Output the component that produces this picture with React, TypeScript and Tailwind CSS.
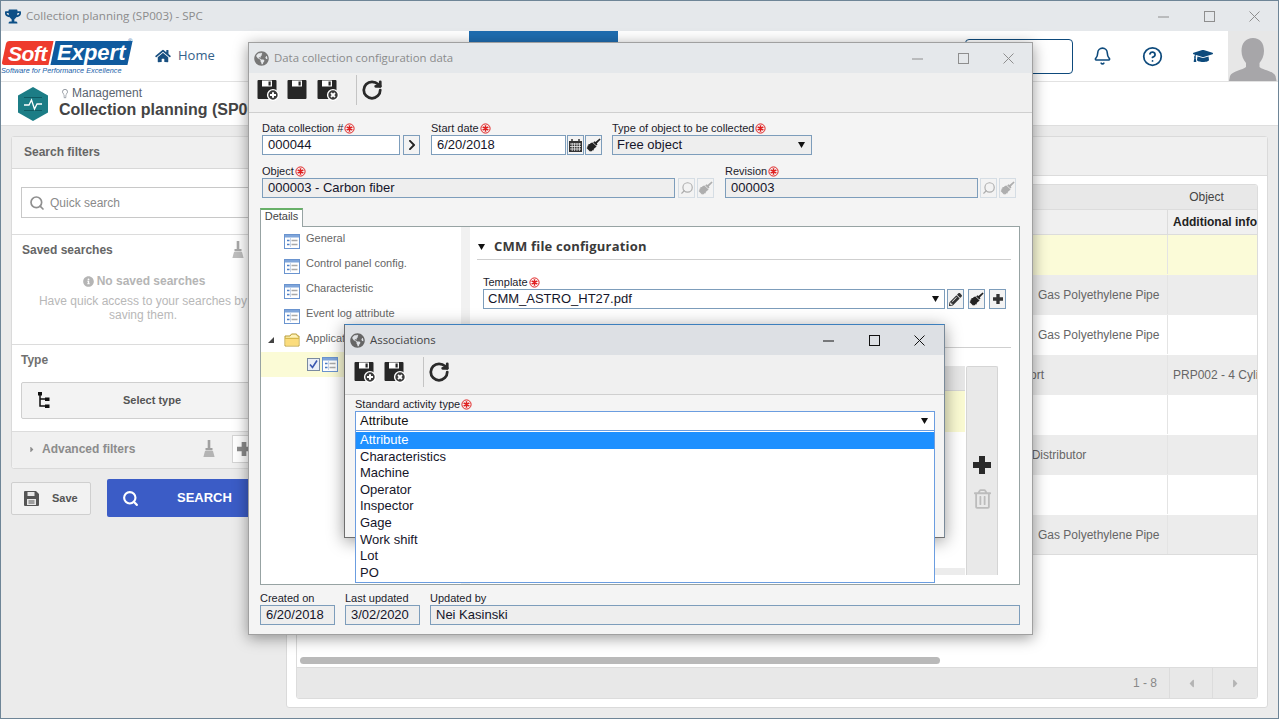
import React from "react";
import { FaTrophy, FaHome, FaGlobeAmericas, FaGraduationCap, FaPencilAlt, FaRegTrashAlt, FaCaretRight, FaCaretLeft, FaInfoCircle, FaChevronRight } from "react-icons/fa";
import { Bell, CircleHelp, Search, RotateCw, Lightbulb } from "lucide-react";

const sans = "font-['Liberation_Sans',Arial,sans-serif]";

function Req() {
  return (
    <svg width="11" height="11" viewBox="0 0 11 11" className="inline-block ml-[1px] -mt-[2px] align-middle">
      <circle cx="5.5" cy="5.5" r="4.6" fill="none" stroke="#e02020" strokeWidth="1" />
      <path d="M5.5 2.2v6.6M2.6 3.8l5.8 3.4M8.4 3.8L2.6 7.2" stroke="#e02020" strokeWidth="1.5" />
    </svg>
  );
}

function Floppy({ badge }: { badge?: "plus" | "x" }) {
  return (
    <svg width="22" height="22" viewBox="0 0 22 22">
      <path d="M1.5 1h17a1 1 0 0 1 1 1v17a1 1 0 0 1-1 1h-17a1 1 0 0 1-1-1V2a1 1 0 0 1 1-1z" fill="#262626" />
      <rect x="5" y="1.5" width="10" height="6" fill="#fff" />
      <rect x="11.5" y="2.5" width="2.2" height="4" fill="#262626" />
      {badge && <circle cx="16" cy="16" r="5.4" fill="#3a3a3a" stroke="#fff" strokeWidth="1.4" />}
      {badge === "plus" && <path d="M13 16h6M16 13.3v5.4" stroke="#fff" strokeWidth="2" />}
      {badge === "x" && <path d="M14 14l4 4M18 14l-4 4" stroke="#fff" strokeWidth="1.8" />}
    </svg>
  );
}

function FormIcon() {
  return (
    <svg width="16" height="15" viewBox="0 0 16 15" className="shrink-0">
      <rect x="0.5" y="0.5" width="15" height="14" fill="#fff" stroke="#6a94cf" />
      <rect x="1" y="1" width="14" height="2.5" fill="#7fa5da" />
      <path d="M3 6.5h2.5M3 10.5h2.5" stroke="#4f7fc4" strokeWidth="1.5" />
      <path d="M7.5 6.5h6M7.5 10.5h6" stroke="#a9a9a9" strokeWidth="1.5" />
      <path d="M6.5 4v9" stroke="#c8d6ea" />
    </svg>
  );
}

function UprightBroom({ color }: { color: string }) {
  return (
    <svg width="12" height="18" viewBox="0 0 12 18">
      <rect x="4.7" y="0" width="2.6" height="8" fill={color} />
      <rect x="2.5" y="8" width="7" height="2.4" fill={color} />
      <path d="M2 11h8l1.6 6H.4z" fill={color} opacity="0.75" />
    </svg>
  );
}

function Brush({ color }: { color: string }) {
  return (
    <svg width="15" height="15" viewBox="0 0 15 15">
      <path d="M14.6 1.4l-1-1-4.2 3.600-1-.7-1.200 1.200 3.100 3.100 1.200-1.200-.7-1z" fill={color} />
      <path d="M6.400 4.400l4.200 4.200-1.700 1.300-1 .9-.4 1.700-.9-.4-.7 1.300-1-.6-.7.9L.6 9.900l1.100-.9-.5-1 1.300-.7-.3-1 1.700-.4.9-1z" fill={color} />
    </svg>
  );
}

function Cross({ size, color }: { size: number; color: string }) {
  return (
    <svg width={size} height={size} viewBox="0 0 18 18">
      <path d="M6 0h6v6h6v6h-6v6H6v-6H0V6h6z" fill={color} />
    </svg>
  );
}

function Caption({ t, req, w }: { t: string; req?: boolean; w: string }) {
  return <div className={`${w} h-[13px] text-[11px] leading-[13px] text-[#1c1c2c] whitespace-nowrap`}>{t}{req && <Req />}</div>;
}

function Field({ v, w, grey, children }: { v?: string; w: string; grey?: boolean; children?: React.ReactNode }) {
  return (
    <div className={`${w} h-[20px] border border-[#7d9dbb] ${grey ? "bg-[#eeeeee]" : "bg-white"} ${children ? "pl-[4px]" : "pl-[5px]"} pr-[4px] flex items-center justify-between text-[13px] text-[#15152a] whitespace-nowrap overflow-hidden`}>
      <span>{v}</span>
      {children}
    </div>
  );
}

function IconBtn({ children, off, w = "w-[17px]" }: { children: React.ReactNode; off?: boolean; w?: string }) {
  return (
    <div className={`${w} h-[20px] shrink-0 border ${off ? "border-[#d5dde4] text-[#aeaeae]" : "border-[#7d9dbb] text-[#333]"} bg-[#f3f3f3] flex items-center justify-center`}>
      {children}
    </div>
  );
}

function Caret() {
  return <svg width="7" height="6" viewBox="0 0 7 6" className="shrink-0"><path d="M0 0h7L3.5 6z" fill="#111" /></svg>;
}

function Controls({ color, w }: { color: string; w: string }) {
  return (
    <div className={`flex items-center ${w} justify-between`} style={{ color }}>
      <svg width="11" height="11" viewBox="0 0 11 11"><path d="M0 6h11" stroke="currentColor" /></svg>
      <svg width="11" height="11" viewBox="0 0 11 11"><rect x="0.5" y="0.5" width="10" height="10" fill="none" stroke="currentColor" /></svg>
      <svg width="11" height="11" viewBox="0 0 11 11"><path d="M0.5 0.5l10 10M10.5 0.5l-10 10" stroke="currentColor" /></svg>
    </div>
  );
}

const rows = [
  { bg: "bg-[#fbfbd8]", text: "", pad: "" },
  { bg: "bg-[#ececec]", text: "Gas Polyethylene Pipe", pad: "pl-[741px]" },
  { bg: "bg-white", text: "Gas Polyethylene Pipe", pad: "pl-[741px]" },
  { bg: "bg-[#ececec]", text: "Port", pad: "pl-[725px]", extra: "PRP002 - 4 Cylinder" },
  { bg: "bg-white", text: "", pad: "" },
  { bg: "bg-[#ececec]", text: "Direct Distributor", pad: "pl-[700px]" },
  { bg: "bg-white", text: "", pad: "" },
  { bg: "bg-[#ececec]", text: "Gas Polyethylene Pipe", pad: "pl-[741px]" },
];

const options = ["Attribute", "Characteristics", "Machine", "Operator", "Inspector", "Gage", "Work shift", "Lot", "PO"];

function Logo() {
  return (
    <div className="w-[131px] h-[50px] pt-[10px] shrink-0 relative">
      <div className="flex h-[24px] w-[127px] -skew-x-12 ml-[3px]">
        <div className="w-[47px] bg-[#ee3b2d] rounded-l-[3px] flex items-center justify-center">
          <span className="skew-x-12 text-white font-bold italic text-[21px] leading-none font-['Liberation_Sans',sans-serif] tracking-[-0.5px]">Soft</span>
        </div>
        <div className="w-[77px] ml-[2px] bg-[#0f5a9e] flex items-center justify-center">
          <span className="skew-x-12 text-white font-bold italic text-[22px] leading-none font-['Liberation_Sans',sans-serif]">Expert</span>
        </div>
      </div>
      <span className="absolute left-[127px] top-[7px] text-[6px] leading-none text-[#1a62a8]">®</span>
      <div className="text-[7.3px] leading-[10px] mt-[1px] italic text-[#1a62a8] whitespace-nowrap font-['Liberation_Sans',sans-serif]">Software for Performance Excellence</div>
    </div>
  );
}

export default function App() {
  return (
    <div className={`relative w-[1279px] h-[719px] overflow-hidden bg-[#ebebeb] border border-[#6e8597] flex flex-col ${sans}`}>
      {/* App title bar */}
      <div className="h-[30px] shrink-0 bg-[#e5e8eb] flex items-center pl-[4px] pr-[18px] font-['Open_Sans',sans-serif]">
        <FaTrophy className="text-[#0d4f86] w-[16px] h-[15px]" />
        <span className="ml-[5px] -mt-[1px] text-[11.6px] text-[#8b8b8b] whitespace-nowrap">Collection planning (SP003) - SPC</span>
        <div className="ml-auto"><Controls color="#8e8e8e" w="w-[102px]" /></div>
      </div>

      {/* Header */}
      <div className="h-[51px] shrink-0 bg-white border-b border-[#e2e2e2] flex items-stretch">
        <Logo />
        <div className="flex items-center ml-[23px] w-[314px] text-[#184f80] shrink-0 font-['Open_Sans',sans-serif]">
          <FaHome className="w-[16px] h-[14px]" />
          <span className="ml-[7px] text-[13px] text-[#34618a]">Home</span>
        </div>
        <div className="w-[149px] h-[12px] bg-[#1f6db0] shrink-0" />
        <div className="w-[455px] shrink-0 flex items-center justify-end">
          <div className="w-[108px] h-[35px] border border-[#0e4a7c] rounded-[4px]" />
        </div>
        <div className="flex items-center pl-[20px] gap-[30px] text-[#0d4a7c]">
          <Bell className="w-[19px] h-[20px]" strokeWidth={2} />
          <CircleHelp className="w-[21px] h-[21px]" strokeWidth={2} />
          <FaGraduationCap className="w-[20px] h-[20px]" />
        </div>
        <div className="ml-[15px] flex-1 bg-[#e7e7e7] flex items-end justify-center overflow-hidden">
          <svg width="48" height="44" viewBox="0 0 48 44"><path d="M24 1c7 0 11 5 11 13 0 5-2 9-4.500 12v4c3 3 14 4 16 9l1 5H0l1-5c2-5 13-6 16-9v-4c-2.500-3-4.500-7-4.500-12C12.500 6 17 1 24 1z" fill="#a7a6a9" /></svg>
        </div>
      </div>

      {/* Page title */}
      <div className="h-[44px] shrink-0 bg-white border-b border-[#dedede] flex items-center pl-[16px]">
        <svg width="32" height="34" viewBox="0 0 32 34" className="shrink-0">
          <path d="M16 0l15 8.500v17L16 34 1 25.500v-17z" fill="#1c7d86" />
          <path d="M7 10.500h18M7 23.500h18" stroke="#0f5a62" strokeWidth="1" />
          <path d="M7 18h5l2.500-5 3 9 2.500-5h5" fill="none" stroke="#fff" strokeWidth="1.300" />
        </svg>
        <div className="ml-[10px] text-[#4c4c4c] whitespace-nowrap -mt-[3px]">
          <div className="flex items-center h-[14px] text-[12px] text-[#5a6470] mt-[1px]">
            <Lightbulb className="w-[10px] h-[13px] ml-[1px] mr-[2px]" strokeWidth={1.5} />Management
          </div>
          <div className="text-[16px] leading-[19px] font-bold text-[#444]">Collection planning (SP003)</div>
        </div>
      </div>

      {/* Body */}
      <div className="flex-1 flex gap-[3px] pl-[10px] pr-[10px] pt-[10px] min-h-0">
        {/* Left column */}
        <div className="w-[272px] shrink-0">
          <div className="h-[333px] border border-[#dadada] rounded-[3px] bg-white flex flex-col">
            <div className="h-[32px] bg-[#f0f0f0] border-b border-[#d8d8d8] flex items-center pl-[12px] pb-[2px] text-[12px] font-bold text-[#666]">Search filters</div>
            <div className="h-[66px] border-b border-[#dcdcdc] pt-[18px] pl-[9px]">
              <div className="w-[240px] h-[31px] border border-[#c8c8c8] flex items-center pl-[7px] text-[12px] text-[#8a8a8a]">
                <Search className="w-[16px] h-[16px] text-[#8f8f8f] mr-[5px]" strokeWidth={2.500} />Quick search
              </div>
            </div>
            <div className="h-[110px] border-b border-[#dcdcdc] relative">
              <div className="flex items-center justify-between pl-[10px] pr-[38px] pt-[6px] text-[12px] font-bold text-[#666]">
                <span>Saved searches</span>
                <UprightBroom color="#a8a8a8" />
              </div>
              <div className="mt-[13px] w-[264px] flex justify-center items-center text-[12px] font-bold text-[#b5b5b5]">
                <FaInfoCircle className="w-[11px] h-[11px] mr-[3px]" />No saved searches
              </div>
              <div className="text-[12px] leading-[14px] mt-[4px] text-[#b8b8b8] text-center w-[262px] whitespace-nowrap">Have quick access to your searches by<br />saving them.</div>
            </div>
            <div className="h-[87px] border-b border-[#dcdcdc] pl-[9px] pt-[6px]">
              <div className="text-[12px] font-bold text-[#707070]">Type</div>
              <div className="mt-[13px] w-[262px] h-[37px] border border-[#cfcfcf] rounded-[2px] bg-[#f3f3f3] flex items-center justify-center relative text-[11px] font-bold text-[#555]">
                <svg width="12" height="18" viewBox="0 0 12 18" className="absolute left-[16px]"><path d="M2 2v12h7M2 7h7" fill="none" stroke="#111" strokeWidth="1.500" /><rect x="0" y="0" width="4" height="3.500" fill="#111" /><rect x="7" y="5.500" width="4.500" height="3.500" fill="#111" /><rect x="7" y="12.500" width="4.500" height="3.500" fill="#111" /></svg>
                Select type
              </div>
            </div>
            <div className="flex-1 bg-[#f0f0f0] flex items-center pl-[16px] pb-[2px] text-[12px] font-bold text-[#8c8c8c] rounded-b-[3px]">
              <FaCaretRight className="w-[8px] h-[9px] mr-[6px]" />
              <span className="w-[161px]">Advanced filters</span>
              <UprightBroom color="#a0a0a0" />
              <div className="ml-[17px] w-[24px] h-[28px] bg-white border border-[#d4d4d4] flex items-center justify-center"><Cross size={14} color="#8a8a8a" /></div>
            </div>
          </div>
          <div className="flex items-center gap-[16px] mt-[10px]">
            <div className="w-[80px] h-[33px] bg-[#f2f2f2] border border-[#cfcfcf] rounded-[2px] flex items-center pl-[12px] text-[11px] font-bold text-[#555]">
              <svg width="15" height="15" viewBox="0 0 15 15" className="mr-[13px]"><path d="M1 0h11l3 3v11a1 1 0 0 1-1 1H1a1 1 0 0 1-1-1V1a1 1 0 0 1 1-1z" fill="#555" /><rect x="3.500" y="1" width="7" height="4" fill="#e8e8e8" /><rect x="3" y="8" width="9" height="6" fill="#e8e8e8" /><path d="M4.500 10h6M4.500 12h6" stroke="#555" /></svg>
              Save
            </div>
            <div className="w-[160px] h-[38px] bg-[#3b5cc6] rounded-[2px] flex items-center pl-[15px] text-white text-[13px] font-bold">
              <Search className="w-[17px] h-[17px] mr-[38px]" strokeWidth={3} />SEARCH
            </div>
          </div>
        </div>

        {/* Right panel */}
        <div className="flex-1 h-[572px] border border-[#dadada] rounded-[3px] bg-white min-w-0 flex flex-col">
          <div className="h-[39px] shrink-0 bg-[#f0f0f0] border-b border-[#dcdcdc]" />
          <div className="mx-[9px] mt-[8px] mb-[8px] flex-1 border border-[#dcdcdc] rounded-[3px] flex flex-col min-h-0 overflow-hidden">
            <div className="h-[25px] shrink-0 bg-[#e8e8e8] border-b border-[#dcdcdc] flex text-[12px] text-[#444]">
              <div className="flex-1" />
              <div className="w-[91px] pr-[10px] flex items-center justify-center">Object</div>
            </div>
            <div className="h-[25px] shrink-0 bg-[#f0f0f0] border-b border-[#dcdcdc] flex text-[12px] font-bold text-[#222]">
              <div className="w-[871px] shrink-0 border-r border-[#dcdcdc]" />
              <div className="pl-[5px] flex items-center whitespace-nowrap overflow-hidden flex-1">Additional info</div>
            </div>
            {rows.map((r, i) => (
              <div key={i} className={`h-[40px] shrink-0 flex ${r.bg} border-b ${i === 7 ? "border-[#dcdcdc]" : "border-transparent"} text-[12px] text-[#666]`}>
                <div className={`w-[871px] shrink-0 border-r border-[#e4e4e4] flex items-center whitespace-nowrap ${r.pad}`}>{r.text}</div>
                <div className="pl-[5px] flex-1 flex items-center whitespace-nowrap overflow-hidden">{r.extra}</div>
              </div>
            ))}
            <div className="flex-1 relative">
              <div className="absolute left-[3px] bottom-[3px] w-[640px] h-[7px] rounded-full bg-[#b9b9b9]" />
            </div>
            <div className="h-[31px] shrink-0 bg-[#e8e8e8] border-t border-[#dcdcdc] flex items-stretch text-[12px] text-[#888]">
              <div className="flex-1 flex items-center justify-end pr-[12px]">1 - 8</div>
              <div className="w-[44px] border-x border-[#dcdcdc] flex items-center justify-center text-[#b4b4b4]"><FaCaretLeft className="w-[11px] h-[13px]" /></div>
              <div className="w-[44px] flex items-center justify-center text-[#b4b4b4]"><FaCaretRight className="w-[11px] h-[13px]" /></div>
            </div>
          </div>
        </div>
      </div>

      {/* Data collection window */}
      <div className="absolute left-[247px] top-[41px] w-[785px] h-[593px] bg-[#f4f4f4] border border-[#a0a0a0] shadow-[0_3px_14px_rgba(0,0,0,0.4)] flex flex-col">
        <div className="h-[30px] shrink-0 bg-[#e5e8eb] flex items-center pl-[5px] pr-[18px] font-['Open_Sans',sans-serif]">
          <FaGlobeAmericas className="w-[15px] h-[15px] text-[#777]" />
          <span className="ml-[5px] -mt-[1px] text-[11.4px] text-[#8b8b8b] whitespace-nowrap">Data collection configuration data</span>
          <div className="ml-auto"><Controls color="#8e8e8e" w="w-[102px]" /></div>
        </div>
        <div className="h-[40px] shrink-0 bg-[#f0f0f0] border-b border-[#cfcfcf] flex items-center pl-[8px] pb-[5px]">
          <Floppy badge="plus" />
          <div className="ml-[8px] h-[22px]"><Floppy /></div>
          <div className="ml-[8px] h-[22px]"><Floppy badge="x" /></div>
          <div className="w-px h-[30px] bg-[#c4c4c4] ml-[17px]" />
          <RotateCw className="w-[22px] h-[22px] text-[#2a2a2a] ml-[4px]" strokeWidth={3} />
        </div>

        <div className="flex-1 flex flex-col min-h-0 pl-[13px] pr-[12px] pt-[9px]">
          <div className="flex">
            <div className="w-[169px] shrink-0"><Caption t="Data collection #" req w="w-full" />
              <div className="flex gap-[3px]"><Field v="000044" w="w-[138px]" /><IconBtn><FaChevronRight className="w-[10px] h-[12px] text-[#222]" /></IconBtn></div>
            </div>
            <div className="w-[181px] shrink-0"><Caption t="Start date" req w="w-full" />
              <div className="flex gap-[1px]"><Field v="6/20/2018" w="w-[135px]" />
                <IconBtn><svg width="13" height="13" viewBox="0 0 13 13"><path d="M0 2h13v11H0z" fill="#333" /><path d="M3 0v3M10 0v3" stroke="#333" strokeWidth="1.500" /><path d="M1 5h11M1 7.500h11M1 10h11M3.200 4v8M5.600 4v8M8 4v8M10.400 4v8" stroke="#eee" strokeWidth="0.800" /></svg></IconBtn>
                <IconBtn><Brush color="#222" /></IconBtn>
              </div>
            </div>
            <div className="w-[200px]"><Caption t="Type of object to be collected" req w="w-full" />
              <Field v="Free object" w="w-[200px]" grey><span className="mr-[2px]"><Caret /></span></Field>
            </div>
          </div>
          <div className="flex mt-[10px]">
            <div className="w-[463px] shrink-0"><Caption t="Object" req w="w-full" />
              <div className="flex gap-[3px]"><Field v="000003 - Carbon fiber" w="w-[413px]" grey />
                <IconBtn off><Search className="w-[14px] h-[14px] -scale-x-100" strokeWidth={2} /></IconBtn>
                <div className="-ml-[1px]"><IconBtn off><Brush color="#aeaeae" /></IconBtn></div>
              </div>
            </div>
            <div className="flex-1"><Caption t="Revision" req w="w-full" />
              <div className="flex gap-[2px]"><Field v="000003" w="w-[253px]" grey />
                <IconBtn off><Search className="w-[14px] h-[14px] -scale-x-100" strokeWidth={2} /></IconBtn>
                <IconBtn off><Brush color="#aeaeae" /></IconBtn>
              </div>
            </div>
          </div>

          {/* Tabs */}
          <div className="mt-[10px] -ml-[2px] w-[43px] h-[19px] bg-white border border-[#97a3a3] border-t-2 border-t-[#68b068] border-b-0 text-[11px] leading-[10px] pt-[1px] text-center text-[#444] relative z-10 -mb-px">Details</div>
          <div className="-ml-[2px] h-[359px] w-[760px] bg-white border border-[#97a3a3] flex shrink-0">
            <div className="w-[200px] shrink-0 text-[11px] text-[#666] pt-[2px] whitespace-nowrap">
              {["General", "Control panel config.", "Characteristic", "Event log attribute"].map((t) => (
                <div key={t} className="h-[25px] flex items-center pl-[23px]"><FormIcon /><span className="ml-[6px] -mt-[6px]">{t}</span></div>
              ))}
              <div className="h-[25px] -mt-[2px] flex items-center pl-[6px]">
                <svg width="8" height="8" viewBox="0 0 8 8"><path d="M7 1v6H1z" fill="#444" /></svg>
                <svg width="16" height="14" viewBox="0 0 16 14" className="ml-[9px]"><path d="M1 3h5l1.500-2h5l1 2h1.500v10H1z" fill="#fff3b8" stroke="#b89a30" /><path d="M1 5.500h14" stroke="#d7b84a" strokeWidth="1.500" /><rect x="1.500" y="6" width="13" height="6.500" fill="#fbdc7c" /></svg>
                <span className="ml-[6px] -mt-[2px]">Application</span>
              </div>
              <div className="h-[25px] bg-[#fbfbd6] flex items-center pl-[46px]">
                <svg width="13" height="13" viewBox="0 0 13 13"><rect x="0.500" y="0.500" width="12" height="12" fill="#e9eef7" stroke="#7a8aa0" /><path d="M3 6.500l2.500 3L10 2.500" fill="none" stroke="#3a57b0" strokeWidth="1.600" /></svg>
                <span className="ml-[2px]"><FormIcon /></span>
              </div>
            </div>
            <div className="w-[9px] shrink-0 bg-[#f1f1f1]" />
            <div className="flex-1 pl-[7px] pr-[8px] relative">
              <div className="h-[33px] border-b border-[#cfcfcf] flex items-center pl-[1px] pt-[8px] text-[13px] font-bold text-[#3a3a3a] tracking-[0.2px] font-['Open_Sans',sans-serif]">
                <Caret /><span className="ml-[9px]">CMM file configuration</span>
              </div>
              <div className="pl-[6px] pt-[16px]">
                <Caption t="Template" req w="w-full" />
                <div className="flex">
                  <Field v="CMM_ASTRO_HT27.pdf" w="w-[462px]"><span className="mr-[1px]"><Caret /></span></Field>
                  <div className="ml-[2px]"><IconBtn><FaPencilAlt className="w-[13px] h-[13px]" /></IconBtn></div>
                  <div className="ml-[4px]"><IconBtn><Brush color="#222" /></IconBtn></div>
                  <div className="ml-[4px]"><IconBtn><Cross size={10} color="#333" /></IconBtn></div>
                </div>
              </div>
              <div className="h-px bg-[#cfcfcf] mt-[38px]" />
              <div className="flex justify-end mt-[18px] h-[209px]">
                <div className="w-[100px] mr-[1px] flex flex-col">
                  <div className="h-[25px] bg-[#e6e6e6] border-b border-[#d5d5d5]" />
                  <div className="h-[41px] bg-[#fafad2]" />
                  <div className="flex-1" />
                  <div className="h-[7px] bg-[#ececec]" />
                </div>
                <div className="w-[32px] bg-[#e9e9e9] border-x border-t border-[#d5d5d5] rounded-t-[2px] flex flex-col items-center pt-[89px] mr-[13px]">
                  <Cross size={18} color="#2a2a2a" />
                  <FaRegTrashAlt className="w-[17px] h-[20px] text-[#bcbcbc] mt-[15px]" />
                </div>
              </div>
            </div>
          </div>

          {/* Footer fields */}
          <div className="flex mt-[7px] -ml-[2px]">
            <div className="w-[85px] shrink-0"><Caption t="Created on" w="w-full" /><Field v="6/20/2018" w="w-[75px]" grey /></div>
            <div className="w-[85px] shrink-0"><Caption t="Last updated" w="w-full" /><Field v="3/02/2020" w="w-[75px]" grey /></div>
            <div className="flex-1"><Caption t="Updated by" w="w-full" /><Field v="Nei Kasinski" w="w-[590px]" grey /></div>
          </div>
        </div>
      </div>

      {/* Associations window */}
      <div className="absolute left-[343px] top-[323px] w-[601px] h-[214px] bg-[#f4f4f4] border border-[#6f6f6f] border-t-[#3c7fbd] border-r-[#7a8a99] shadow-[0_3px_16px_rgba(0,0,0,0.4)] flex flex-col">
        <div className="h-[30px] shrink-0 bg-[#dde0e4] flex items-center pl-[5px] pr-[19px] font-['Open_Sans',sans-serif]">
          <FaGlobeAmericas className="w-[15px] h-[15px] text-[#666]" />
          <span className="ml-[5px] -mt-[1px] text-[11.4px] text-[#444]">Associations</span>
          <div className="ml-auto"><Controls color="#111" w="w-[102px]" /></div>
        </div>
        <div className="h-[40px] shrink-0 bg-[#f0f0f0] border-b border-[#cfcfcf] flex items-center pl-[9px] pb-[5px]">
          <Floppy badge="plus" />
          <div className="ml-[8px] h-[22px]"><Floppy badge="x" /></div>
          <div className="w-px h-[30px] bg-[#c4c4c4] ml-[17px]" />
          <RotateCw className="w-[22px] h-[22px] text-[#2a2a2a] ml-[4px]" strokeWidth={3} />
        </div>
        <div className="pl-[10px] pt-[3px] relative">
          <Caption t="Standard activity type" req w="w-full" />
          <div className="w-[580px] h-[20px] bg-white border border-[#6b9de0] flex items-center justify-between pl-[4px] pr-[6px] text-[13px] text-[#111]">
            <span>Attribute</span><Caret />
          </div>
          <div className="absolute left-[10px] top-[36px] w-[580px] h-[152px] pt-[1px] bg-white border border-[#6b9de0] border-t-0 text-[13px] leading-[16.6px] text-[#15152a] z-10">
            {options.map((o, i) => (
              <div key={o} className={`h-[16.6px] pl-[4px] ${i === 0 ? "bg-[#1e90ff] text-white" : ""}`}>{o}</div>
            ))}
          </div>
        </div>
      </div>
    </div>
  );
}
